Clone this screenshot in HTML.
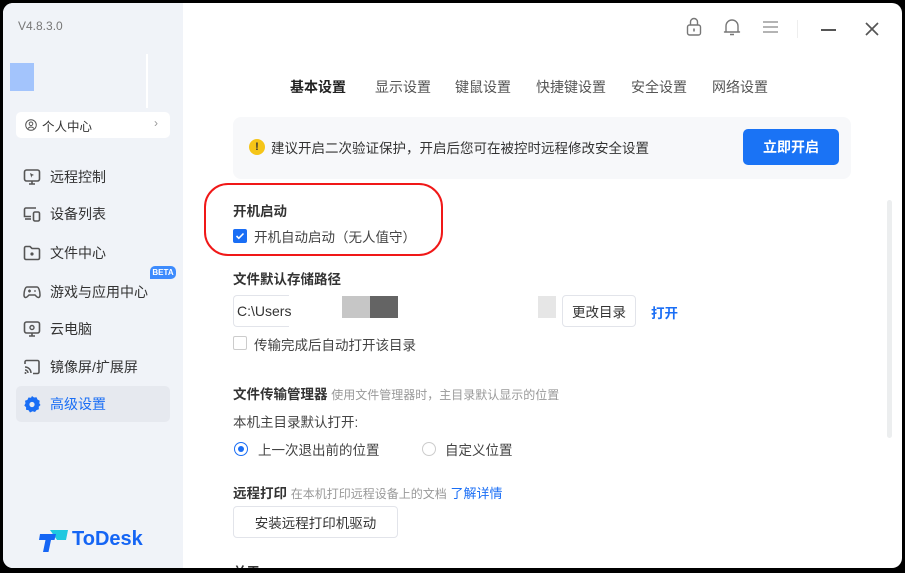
<!DOCTYPE html>
<html><head><meta charset="utf-8"><style>
*{margin:0;padding:0;box-sizing:border-box}
body{width:905px;height:573px;background:#000;font-family:"Liberation Sans","Noto Sans CJK SC",sans-serif;position:relative;overflow:hidden;color:#333}
.win{position:absolute;left:3px;top:3px;width:899px;height:565px;background:#fff;border-radius:10px;overflow:hidden}
.side{position:absolute;left:0;top:0;width:180px;height:565px;background:#f0f3f8}
.abs{position:absolute}
.nav{position:absolute;left:13px;width:154px;height:36px;font-size:14px;color:#333;display:flex;align-items:center;padding-left:7px}
.nav svg{margin-right:9px}
.t{font-size:13.5px;color:#333;position:absolute;white-space:nowrap}
.b{font-weight:bold;font-size:13.5px}
.btn{position:absolute;border:1px solid #e2e4ea;border-radius:4px;background:#fff;font-size:13.5px;color:#333;display:flex;align-items:center;justify-content:center}
</style></head><body>
<div class="win">
<div class="side">
  <div class="t" style="left:15px;top:16px;font-size:12px;color:#777">V4.8.3.0</div>
  <div class="abs" style="left:7px;top:60px;width:24px;height:28px;background:#a3c4fc"></div>
  <div class="abs" style="left:143px;top:51px;width:2px;height:54px;background:#fff"></div>
  <div class="abs" style="left:13px;top:109px;width:154px;height:26px;background:#fff;border-radius:5px"></div>
  <svg class="abs" style="left:22px;top:116px" width="12" height="12" viewBox="0 0 12 12"><circle cx="6" cy="6" r="5.3" fill="none" stroke="#555" stroke-width="1"/><circle cx="6" cy="4.8" r="1.8" fill="none" stroke="#555"/><path d="M3 9.5c1.5-2 4.5-2 6 0" fill="none" stroke="#555"/></svg>
  <div class="t" style="left:39px;top:113px;font-size:12.5px">个人中心</div>
  <div class="t" style="left:151px;top:113px;font-size:12px;color:#999">›</div>
  <div class="nav" style="top:156px"><svg width="18" height="18" viewBox="0 0 18 18"><rect x="1.5" y="2" width="15" height="11" rx="2" fill="none" stroke="#555" stroke-width="1.6"/><path d="M6 16h6M9 13v3" stroke="#555" stroke-width="1.6"/><path d="M7 5l4 2-2 .7-.7 2z" fill="#555"/></svg>远程控制</div>
  <div class="nav" style="top:193px"><svg width="18" height="18" viewBox="0 0 18 18"><path d="M13 3H3a1.5 1.5 0 0 0-1.5 1.5v7H8" fill="none" stroke="#555" stroke-width="1.6"/><path d="M2 14h6" stroke="#555" stroke-width="1.6"/><rect x="10.5" y="7" width="6" height="9" rx="1.5" fill="none" stroke="#555" stroke-width="1.6"/></svg>设备列表</div>
  <div class="nav" style="top:232px"><svg width="18" height="18" viewBox="0 0 18 18"><path d="M1.5 4a1.5 1.5 0 0 1 1.5-1.5h4l2 2h6a1.5 1.5 0 0 1 1.5 1.5v8a1.5 1.5 0 0 1-1.5 1.5H3A1.5 1.5 0 0 1 1.5 14z" fill="none" stroke="#555" stroke-width="1.6"/><circle cx="9" cy="10" r="1.6" fill="#555"/></svg>文件中心</div>
  <div class="abs" style="left:147px;top:263px;width:26px;height:13px;background:#3d8bfd;border-radius:5px 5px 5px 0;color:#fff;font-size:8px;font-weight:bold;text-align:center;line-height:13px">BETA</div>
  <div class="nav" style="top:271px"><svg width="18" height="18" viewBox="0 0 18 18"><path d="M4 4h10c2 0 3 5 3 8s-2 3-3.5 1.5L12 12H6l-1.5 1.5C3 15 1 15 1 12s1-8 3-8z" fill="none" stroke="#555" stroke-width="1.5"/><path d="M5 8h3M6.5 6.5v3" stroke="#555" stroke-width="1.4"/><circle cx="12" cy="8" r=".9" fill="#555"/></svg>游戏与应用中心</div>
  <div class="nav" style="top:308px"><svg width="18" height="18" viewBox="0 0 18 18"><rect x="1.5" y="2" width="15" height="11" rx="2" fill="none" stroke="#555" stroke-width="1.6"/><path d="M6 16h6M9 13v3" stroke="#555" stroke-width="1.6"/><circle cx="9" cy="7.5" r="2" fill="none" stroke="#555" stroke-width="1.4"/></svg>云电脑</div>
  <div class="nav" style="top:346px"><svg width="18" height="18" viewBox="0 0 18 18"><path d="M2 6V4a1.5 1.5 0 0 1 1.5-1.5h11A1.5 1.5 0 0 1 16 4v10a1.5 1.5 0 0 1-1.5 1.5H10" fill="none" stroke="#555" stroke-width="1.6"/><path d="M2 9a6 6 0 0 1 6 6M2 12a3 3 0 0 1 3 3" fill="none" stroke="#555" stroke-width="1.5"/><circle cx="2.5" cy="15" r="1" fill="#555"/></svg>镜像屏/扩展屏</div>
  <div class="nav" style="top:383px;background:#e6e9ef;border-radius:5px;color:#1a6ef5"><svg width="18" height="18" viewBox="0 0 18 18"><path d="M9 1l2 1.5 2.5-.3 1 2.3 2.2 1.3-.4 2.5L17.5 10l-1.8 1.8.2 2.5-2.4.8L12 17l-2.4-.8L7 17.5 5.6 15.3 3 14.8l.1-2.5L1.3 10.5 2.5 8.3 2 5.8l2.4-.9L5.5 2.5 8 2.8z" fill="#1a6ef5"/><circle cx="9" cy="9.5" r="2.6" fill="#e6e9ef"/></svg>高级设置</div>
  <svg class="abs" style="left:36px;top:526px" width="30" height="24" viewBox="0 0 30 24"><path d="M11 1h18l-2 10h-9z" fill="#1ec8e0"/><path d="M1 5h16l-1.5 6H12l-2.5 12H4l2.5-12H0z" fill="#1565f4"/></svg>
  <div class="t" style="left:69px;top:525px;font-size:20px;font-weight:bold;color:#1565f4">ToDesk</div>
</div>
<svg class="abs" style="left:683px;top:14px" width="16" height="20" viewBox="0 0 16 20"><rect x="1.5" y="8" width="13" height="10" rx="2" fill="none" stroke="#777" stroke-width="1.4"/><path d="M4.5 8V5a3.5 3.5 0 0 1 7 0v3" fill="none" stroke="#777" stroke-width="1.4"/><path d="M8 11.5v3" stroke="#777" stroke-width="1.6"/></svg>
<svg class="abs" style="left:720px;top:14px" width="18" height="20" viewBox="0 0 18 20"><path d="M3 15V9a6 6 0 0 1 12 0v6h1.5H1.5z" fill="none" stroke="#777" stroke-width="1.4" stroke-linejoin="round"/><path d="M7 17.5h4" stroke="#777" stroke-width="1.4"/></svg>
<svg class="abs" style="left:760px;top:18px" width="15" height="12" viewBox="0 0 15 12"><path d="M0 1h15M0 6h15M0 11h15" stroke="#888" stroke-width="1.3"/></svg>
<div class="abs" style="left:794px;top:17px;width:1px;height:18px;background:#eee"></div>
<div class="abs" style="left:818px;top:26px;width:15px;height:2px;background:#555"></div>
<svg class="abs" style="left:862px;top:19px" width="14" height="14" viewBox="0 0 14 14"><path d="M1 1l12 12M13 1L1 13" stroke="#555" stroke-width="1.7"/></svg>
<div class="t" style="left:287px;top:74px;font-size:14px;font-weight:bold;color:#222">基本设置</div>
<div class="t" style="left:372px;top:74px;font-size:14px;color:#555">显示设置</div>
<div class="t" style="left:452px;top:74px;font-size:14px;color:#555">键鼠设置</div>
<div class="t" style="left:533px;top:74px;font-size:14px;color:#555">快捷键设置</div>
<div class="t" style="left:628px;top:74px;font-size:14px;color:#555">安全设置</div>
<div class="t" style="left:709px;top:74px;font-size:14px;color:#555">网络设置</div>
<div class="abs" style="left:230px;top:114px;width:618px;height:62px;background:#f7f8fa;border-radius:8px"></div>
<div class="abs" style="left:246px;top:136px;width:16px;height:16px;border-radius:50%;background:#f5c518;color:#333;font-size:11px;font-weight:bold;text-align:center;line-height:16px">!</div>
<div class="t" style="left:268px;top:134px">建议开启二次验证保护，开启后您可在被控时远程修改安全设置</div>
<div class="abs" style="left:740px;top:126px;width:96px;height:36px;background:#1a73f5;border-radius:5px;color:#fff;font-size:14px;font-weight:bold;text-align:center;line-height:36px">立即开启</div>
<div class="abs" style="left:201px;top:180px;width:239px;height:73px;border:2px solid #f01818;border-radius:24px"></div>
<div class="t b" style="left:230px;top:197px">开机启动</div>
<div class="abs" style="left:230px;top:226px;width:14px;height:14px;background:#1a6ef5;border-radius:2px"></div>
<svg class="abs" style="left:232px;top:228px" width="10" height="10" viewBox="0 0 10 10"><path d="M1.5 5l2.3 2.3L8.5 2.5" fill="none" stroke="#fff" stroke-width="1.6"/></svg>
<div class="t" style="left:251px;top:223px;color:#444">开机自动启动（无人值守）</div>
<div class="t b" style="left:230px;top:265px">文件默认存储路径</div>
<div class="abs" style="left:230px;top:292px;width:56px;height:32px;border:1px solid #e2e4ea;border-right:none;border-radius:4px 0 0 4px"></div>
<div class="t" style="left:234px;top:300px;font-size:14px">C:\Users</div>
<div class="abs" style="left:339px;top:293px;width:28px;height:22px;background:#c6c6c6"></div>
<div class="abs" style="left:367px;top:293px;width:28px;height:22px;background:#646464"></div>
<div class="abs" style="left:535px;top:293px;width:18px;height:22px;background:#e6e6e6"></div>
<div class="btn" style="left:559px;top:292px;width:74px;height:32px">更改目录</div>
<div class="t" style="left:648px;top:299px;color:#1a6ef5;font-weight:bold">打开</div>
<div class="abs" style="left:230px;top:333px;width:14px;height:14px;border:1px solid #ccc;border-radius:2px"></div>
<div class="t" style="left:251px;top:331px;color:#444">传输完成后自动打开该目录</div>
<div class="t b" style="left:230px;top:380px">文件传输管理器 <span style="font-weight:normal;font-size:12px;color:#999">使用文件管理器时，主目录默认显示的位置</span></div>
<div class="t" style="left:230px;top:408px;color:#444">本机主目录默认打开:</div>
<div class="abs" style="left:231px;top:439px;width:14px;height:14px;border:1px solid #1a6ef5;border-radius:50%"></div>
<div class="abs" style="left:235px;top:443px;width:6px;height:6px;background:#1a6ef5;border-radius:50%"></div>
<div class="t" style="left:255px;top:436px;color:#444">上一次退出前的位置</div>
<div class="abs" style="left:419px;top:439px;width:14px;height:14px;border:1px solid #ccc;border-radius:50%"></div>
<div class="t" style="left:442px;top:436px;color:#444">自定义位置</div>
<div class="t b" style="left:230px;top:479px">远程打印 <span style="font-weight:normal;font-size:12px;color:#999">在本机打印远程设备上的文档</span> <span style="font-weight:normal;font-size:13px;color:#1a6ef5">了解详情</span></div>
<div class="btn" style="left:230px;top:503px;width:165px;height:32px">安装远程打印机驱动</div>
<div class="t b" style="left:230px;top:558px">关于</div>
<div class="abs" style="left:884px;top:197px;width:5px;height:238px;background:#eceeef;border-radius:3px"></div>
</div>
</body></html>
